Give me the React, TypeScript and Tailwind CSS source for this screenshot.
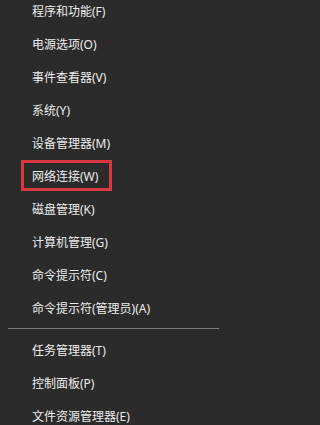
import React from "react";

const top = [
  "程序和功能(F)",
  "电源选项(O)",
  "事件查看器(V)",
  "系统(Y)",
  "设备管理器(M)",
  "网络连接(W)",
  "磁盘管理(K)",
  "计算机管理(G)",
  "命令提示符(C)",
  "命令提示符(管理员)(A)",
];
const bottom = ["任务管理器(T)", "控制面板(P)", "文件资源管理器(E)"];

function Row({ label, boxed }: { label: string; boxed?: boolean }) {
  return (
    <div className="relative flex h-[33px] items-center pl-[32px]">
      {boxed && (
        <div className="absolute left-[21px] top-0 h-[31px] w-[91px] border-[3px] border-[#d63a40]" />
      )}
      <span className="relative text-[12px] leading-none text-[#ececec]">{label}</span>
    </div>
  );
}

export default function App() {
  return (
    <div
      className="h-[425px] w-full min-w-[228px] overflow-hidden bg-[#2b2b2b]"
      style={{ fontFamily: '"Noto Sans", "Noto Sans CJK SC", sans-serif' }}
    >
      <div className="-mt-[5px] flex w-[228px] flex-col">
        {top.map((t) => (
          <Row key={t} label={t} boxed={t === "网络连接(W)"} />
        ))}
        <div className="pt-[3px] pb-[5px]">
          <div className="ml-[8px] mr-[9px] h-px bg-[#7d7d7d]" />
        </div>
        {bottom.map((t) => (
          <Row key={t} label={t} />
        ))}
      </div>
    </div>
  );
}
